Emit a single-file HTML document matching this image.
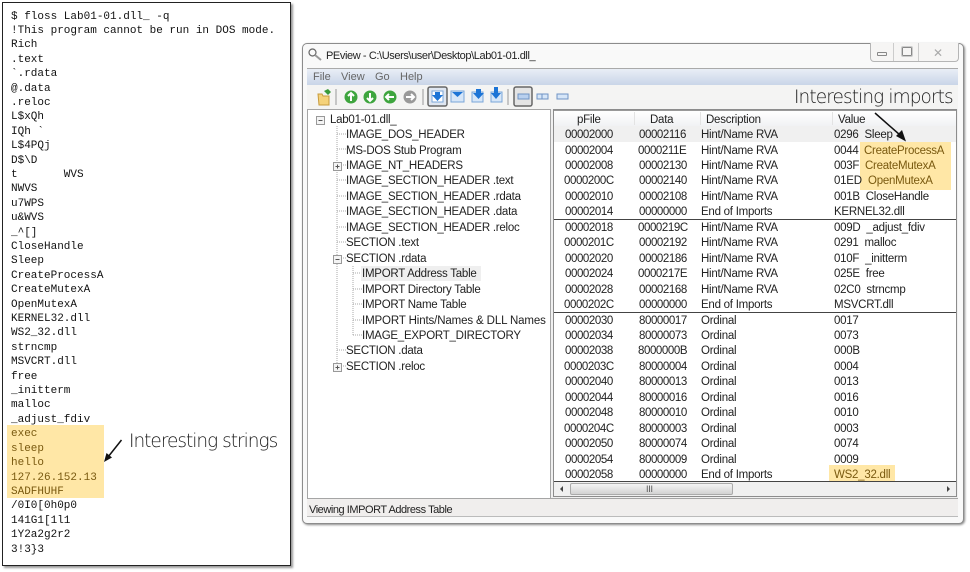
<!DOCTYPE html>
<html><head><meta charset="utf-8">
<style>
html,body{margin:0;padding:0;background:#fff}
body{width:970px;height:572px;position:relative;overflow:hidden;font-family:"Liberation Sans",sans-serif;color:#1c1c1c}
.a{position:absolute}
.t{position:absolute;white-space:pre;font-size:11.5px;line-height:14px;color:#222;letter-spacing:-.25px;margin-top:1px}
.d{letter-spacing:-.42px}
#term{left:2px;top:2px;width:287px;height:562px;border:1px solid #222;box-shadow:2px 2px 2px #999;background:#fff}
#lines{left:11px;top:9.5px;font:11px/14.4px "Liberation Mono",monospace;color:#111;white-space:pre}
.hl{background:#ffe7a6}
.big{position:absolute;white-space:pre;font-family:"DejaVu Sans",sans-serif;font-weight:200;color:#1c1c1c}
.n{color:#7a5a10}
.ln{position:absolute;background:#bdbdbd}
</style></head><body>
<div class="a" id="term"></div>
<div class="a hl" style="left:7px;top:425px;width:97px;height:73px"></div>
<div class="a" id="lines">$ floss Lab01-01.dll_ -q
!This program cannot be run in DOS mode.
Rich
.text
`.rdata
@.data
.reloc
L$xQh
IQh `
L$4PQj
D$\D
t       WVS
NWVS
u7WPS
u&amp;WVS
_^[]
CloseHandle
Sleep
CreateProcessA
CreateMutexA
OpenMutexA
KERNEL32.dll
WS2_32.dll
strncmp
MSVCRT.dll
free
_initterm
malloc
_adjust_fdiv
<span class="n">exec
sleep
hello
127.26.152.13
SADFHUHF</span>
/0I0[0h0p0
141G1[1l1
1Y2a2g2r2
3!3}3</div>
<div class="big" id="s1" style="left:129px;top:431px;font-size:18.5px;line-height:22px;letter-spacing:-1px">Interesting strings</div>
<svg class="a" style="left:100px;top:435px" width="30" height="35"><path d="M21.500 5 L8 22" stroke="#111" stroke-width="1.5"/><path d="M4 27 L6.500 18 L12 22.500 Z" fill="#111"/></svg>

<div class="a" style="left:302px;top:43px;width:660px;height:479px;background:#f9f9f9;border:1px solid #8c8c8c;border-radius:5px;box-shadow:1px 1px 2px #888"></div>
<svg class="a" style="left:306px;top:46px" width="18" height="18" fill="none" stroke="#666"><circle cx="6.500" cy="6.500" r="3.500" stroke-width="1.200"/><path d="M9 9 L15 14" stroke-width="2" stroke="#999"/></svg>
<div class="t" style="left:326px;top:48px;font-size:11px;letter-spacing:-.4px">PEview - C:\Users\user\Desktop\Lab01-01.dll_</div>
<div class="a" style="left:870px;top:43px;width:87px;height:18px;background:#f6f5f4;border:1px solid #b5b5b5;border-top:0;border-radius:0 0 4px 4px"></div>
<div class="a" style="left:893px;top:43px;width:1px;height:18px;background:#ccc"></div>
<div class="a" style="left:918px;top:43px;width:1px;height:18px;background:#ccc"></div>
<div class="a" style="left:877px;top:52px;width:8px;height:2px;border:1px solid #888;border-radius:1px"></div>
<div class="a" style="left:902px;top:47px;width:8px;height:7px;border:1px solid #888;outline:1px solid #ccc;border-radius:1px"></div>
<div class="t" style="left:933px;top:45px;font-size:12px;color:#aaa">&#x2715;</div>

<div class="a" style="left:307px;top:68px;width:651px;height:16px;background:linear-gradient(#e9eef6,#c9d5e8);border-top:1px solid #aaa"></div>
<div class="t" style="left:313px;top:69px;font-size:11px;color:#666;letter-spacing:0">File</div>
<div class="t" style="left:341px;top:69px;font-size:11px;color:#666;letter-spacing:0">View</div>
<div class="t" style="left:375px;top:69px;font-size:11px;color:#666;letter-spacing:0">Go</div>
<div class="t" style="left:400px;top:69px;font-size:11px;color:#666;letter-spacing:0">Help</div>
<div class="a" style="left:307px;top:85px;width:651px;height:24px;background:#f4f4f3;border-bottom:1px solid #ddd"></div>

<svg class="a" style="left:305px;top:84px" width="280" height="26">
<path d="M13 10h4l1 2h6v9H14z" fill="#f5d27a" stroke="#c79b3c"/><path d="M19 7l4-2 3 3-3 3" fill="#3a9a3a"/>
<line x1="31" y1="5" x2="31" y2="21" stroke="#999"/>
<g fill="#3ea53e"><circle cx="46" cy="13" r="6.500"/><circle cx="65" cy="13" r="6.500"/><circle cx="85" cy="13" r="6.500"/></g><circle cx="105" cy="13" r="6.500" fill="#999"/>
<g stroke="#fff" stroke-width="2" fill="none"><path d="M46 17V9M43 12l3-3 3 3"/><path d="M65 9v8M62 14l3 3 3-3"/><path d="M89 13h-8M84 10l-3 3 3 3"/><path d="M101 13h8M106 10l3 3-3 3"/></g>
<line x1="118" y1="5" x2="118" y2="21" stroke="#999"/>
<rect x="123" y="3" width="19" height="19" rx="2" fill="#dfe6f0" stroke="#666" stroke-width="1.500"/>
<rect x="127" y="7" width="11" height="11" fill="#fff" stroke="#7aa6d8"/><path d="M130 8h5v3h3l-5.500 6-5.500-6h3z" fill="#1c74d6"/>
<rect x="146" y="7" width="13" height="11" fill="#d6e6f8" stroke="#7aa6d8"/><path d="M147 8h11l-5.500 5z" fill="#1c74d6"/>
<rect x="167" y="8" width="11" height="10" fill="#d6e6f8" stroke="#7aa6d8"/><path d="M171 5h5v4h3l-5.500 6-5.500-6h3z" fill="#1c74d6"/>
<rect x="186" y="8" width="11" height="10" fill="#d6e6f8" stroke="#7aa6d8"/><path d="M189 3h4v6h3l-5 6-5-6h3z" fill="#1c74d6"/>
<line x1="203" y1="5" x2="203" y2="21" stroke="#999"/>
<rect x="209" y="3" width="18" height="19" rx="2" fill="#e4e4e4" stroke="#666" stroke-width="1.500"/>
<rect x="213" y="10" width="11" height="5" fill="#b9d0ee" stroke="#6f93c4"/>
<rect x="232" y="10" width="11" height="5" fill="#d6e6f8" stroke="#6f93c4"/><rect x="252" y="10" width="11" height="5" fill="#d6e6f8" stroke="#6f93c4"/>
<line x1="237" y1="10" x2="237" y2="15" stroke="#6f93c4"/>
</svg>

<div class="a" style="left:307px;top:109px;width:651px;height:390px;background:#f0f0f0"></div>
<div class="a" style="left:307px;top:109px;width:242px;height:388px;background:#fff;border:1px solid #a5a5a5"></div>
<div class="a" style="left:553px;top:109px;width:404px;height:388px;background:#fff;border:1px solid #8c8c8c;box-sizing:border-box"></div>
<div class="a" style="left:554px;top:111px;width:402px;height:15px;background:linear-gradient(#fff,#f1f2f4)"></div>
<div class="a" style="left:554px;top:126px;width:402px;height:16px;background:#f0f0f0"></div>
<div class="a" style="left:634px;top:112px;width:1px;height:13px;background:#e3e3e3"></div>
<div class="a" style="left:700px;top:112px;width:1px;height:13px;background:#e3e3e3"></div>
<div class="a" style="left:832px;top:112px;width:1px;height:13px;background:#e3e3e3"></div>
<div class="t" style="left:577px;top:112px">pFile</div><div class="t" style="left:650px;top:112px">Data</div><div class="t" style="left:706px;top:112px">Description</div><div class="t" style="left:838px;top:112px">Value</div>

<div class="a hl" style="left:860px;top:142px;width:91px;height:48px"></div>
<div class="a hl" style="left:829px;top:465px;width:66px;height:17px"></div>
<div class="a" style="left:554px;top:219px;width:402px;height:1px;background:#444"></div>
<div class="a" style="left:554px;top:312px;width:402px;height:1px;background:#444"></div>
<div class="a" style="left:554px;top:481px;width:402px;height:1px;background:#444"></div>

<div class="t d" style="left:565px;top:127.000px">00002000</div><div class="t d" style="left:639px;top:127.000px">00002116</div><div class="t" style="left:701px;top:127.000px">Hint/Name RVA</div><div class="t" style="left:834px;top:127.000px">0296  Sleep</div>
<div class="t d" style="left:565px;top:142.500px">00002004</div><div class="t d" style="left:638px;top:142.500px">0000211E</div><div class="t" style="left:701px;top:142.500px">Hint/Name RVA</div><div class="t" style="left:834px;top:142.500px">0044</div><div class="t n" style="left:864px;top:142.500px">CreateProcessA</div>
<div class="t d" style="left:565px;top:157.900px">00002008</div><div class="t d" style="left:639px;top:157.900px">00002130</div><div class="t" style="left:701px;top:157.900px">Hint/Name RVA</div><div class="t" style="left:834px;top:157.900px">003F</div><div class="t n" style="left:865px;top:157.900px">CreateMutexA</div>
<div class="t d" style="left:564px;top:173.400px">0000200C</div><div class="t d" style="left:639px;top:173.400px">00002140</div><div class="t" style="left:701px;top:173.400px">Hint/Name RVA</div><div class="t" style="left:834px;top:173.400px">01ED</div><div class="t n" style="left:868px;top:173.400px">OpenMutexA</div>
<div class="t d" style="left:565px;top:188.800px">00002010</div><div class="t d" style="left:639px;top:188.800px">00002108</div><div class="t" style="left:701px;top:188.800px">Hint/Name RVA</div><div class="t" style="left:834px;top:188.800px">001B  CloseHandle</div>
<div class="t d" style="left:565px;top:204.300px">00002014</div><div class="t d" style="left:639px;top:204.300px">00000000</div><div class="t" style="left:701px;top:204.300px">End of Imports</div><div class="t" style="left:834px;top:204.300px">KERNEL32.dll</div>
<div class="t d" style="left:565px;top:219.700px">00002018</div><div class="t d" style="left:638px;top:219.700px">0000219C</div><div class="t" style="left:701px;top:219.700px">Hint/Name RVA</div><div class="t" style="left:834px;top:219.700px">009D  _adjust_fdiv</div>
<div class="t d" style="left:564px;top:235.200px">0000201C</div><div class="t d" style="left:639px;top:235.200px">00002192</div><div class="t" style="left:701px;top:235.200px">Hint/Name RVA</div><div class="t" style="left:834px;top:235.200px">0291  malloc</div>
<div class="t d" style="left:565px;top:250.600px">00002020</div><div class="t d" style="left:639px;top:250.600px">00002186</div><div class="t" style="left:701px;top:250.600px">Hint/Name RVA</div><div class="t" style="left:834px;top:250.600px">010F  _initterm</div>
<div class="t d" style="left:565px;top:266.100px">00002024</div><div class="t d" style="left:638px;top:266.100px">0000217E</div><div class="t" style="left:701px;top:266.100px">Hint/Name RVA</div><div class="t" style="left:834px;top:266.100px">025E  free</div>
<div class="t d" style="left:565px;top:281.500px">00002028</div><div class="t d" style="left:639px;top:281.500px">00002168</div><div class="t" style="left:701px;top:281.500px">Hint/Name RVA</div><div class="t" style="left:834px;top:281.500px">02C0  strncmp</div>
<div class="t d" style="left:564px;top:297.000px">0000202C</div><div class="t d" style="left:639px;top:297.000px">00000000</div><div class="t" style="left:701px;top:297.000px">End of Imports</div><div class="t" style="left:834px;top:297.000px">MSVCRT.dll</div>
<div class="t d" style="left:565px;top:312.500px">00002030</div><div class="t d" style="left:639px;top:312.500px">80000017</div><div class="t" style="left:701px;top:312.500px">Ordinal</div><div class="t" style="left:834px;top:312.500px">0017</div>
<div class="t d" style="left:565px;top:327.900px">00002034</div><div class="t d" style="left:639px;top:327.900px">80000073</div><div class="t" style="left:701px;top:327.900px">Ordinal</div><div class="t" style="left:834px;top:327.900px">0073</div>
<div class="t d" style="left:565px;top:343.400px">00002038</div><div class="t d" style="left:638px;top:343.400px">8000000B</div><div class="t" style="left:701px;top:343.400px">Ordinal</div><div class="t" style="left:834px;top:343.400px">000B</div>
<div class="t d" style="left:564px;top:358.800px">0000203C</div><div class="t d" style="left:639px;top:358.800px">80000004</div><div class="t" style="left:701px;top:358.800px">Ordinal</div><div class="t" style="left:834px;top:358.800px">0004</div>
<div class="t d" style="left:565px;top:374.300px">00002040</div><div class="t d" style="left:639px;top:374.300px">80000013</div><div class="t" style="left:701px;top:374.300px">Ordinal</div><div class="t" style="left:834px;top:374.300px">0013</div>
<div class="t d" style="left:565px;top:389.700px">00002044</div><div class="t d" style="left:639px;top:389.700px">80000016</div><div class="t" style="left:701px;top:389.700px">Ordinal</div><div class="t" style="left:834px;top:389.700px">0016</div>
<div class="t d" style="left:565px;top:405.200px">00002048</div><div class="t d" style="left:639px;top:405.200px">80000010</div><div class="t" style="left:701px;top:405.200px">Ordinal</div><div class="t" style="left:834px;top:405.200px">0010</div>
<div class="t d" style="left:564px;top:420.600px">0000204C</div><div class="t d" style="left:639px;top:420.600px">80000003</div><div class="t" style="left:701px;top:420.600px">Ordinal</div><div class="t" style="left:834px;top:420.600px">0003</div>
<div class="t d" style="left:565px;top:436.100px">00002050</div><div class="t d" style="left:639px;top:436.100px">80000074</div><div class="t" style="left:701px;top:436.100px">Ordinal</div><div class="t" style="left:834px;top:436.100px">0074</div>
<div class="t d" style="left:565px;top:451.500px">00002054</div><div class="t d" style="left:639px;top:451.500px">80000009</div><div class="t" style="left:701px;top:451.500px">Ordinal</div><div class="t" style="left:834px;top:451.500px">0009</div>
<div class="t d" style="left:565px;top:467.000px">00002058</div><div class="t d" style="left:639px;top:467.000px">00000000</div><div class="t" style="left:701px;top:467.000px">End of Imports</div><div class="t n" style="left:834px;top:467.000px">WS2_32.dll</div>

<div class="a" style="left:554px;top:482px;width:402px;height:14px;background:#f0f0f0"></div>
<div class="a" style="left:570px;top:483px;width:163px;height:12px;border:1px solid #aaa;border-radius:2px;box-sizing:border-box;background:linear-gradient(#f4f4f4,#d2d2d2)"></div>
<div class="t" style="left:646px;top:481px;font-size:9px;color:#555">III</div>
<div class="a" style="left:560px;top:486px;width:0;height:0;border:3px solid transparent;border-right-color:#444;border-left:0"></div>
<div class="a" style="left:947px;top:486px;width:0;height:0;border:3px solid transparent;border-left-color:#444;border-right:0"></div>

<div class="a" style="left:307px;top:498px;width:651px;height:19px;background:#f0eeed;border-top:1px solid #a5a5a5;border-bottom:1px solid #bbb;box-sizing:border-box"></div>
<div class="t" style="left:309px;top:502px;font-size:11px;letter-spacing:-.45px">Viewing IMPORT Address Table</div>
<div class="big" id="s2" style="left:794px;top:87px;font-size:18.500px;line-height:22px;letter-spacing:-.9px">Interesting imports</div>
<div class="a" style="left:554px;top:110px;width:402px;height:1px;background:#999"></div>
<svg class="a" style="left:870px;top:108px" width="50" height="40"><path d="M5 5 L30 27" stroke="#111" stroke-width="1.500"/><path d="M36 33.500 L26 28 L32 22 Z" fill="#111"/></svg>

<svg class="a" style="left:310px;top:112px" width="80" height="270" fill="none" stroke="#aaa" stroke-dasharray="1 1">
<path d="M27 14V254M27 22h9M27 37h9M27 53h9M27 68h9M27 84h9M27 99h9M27 115h9M27 130h9M27 146h9M27 238h9M27 254h9"/>
<path d="M43 154V223M43 161h9M43 177h9M43 192h9M43 208h9M43 223h9"/>
</svg>
<svg class="a" style="left:315px;top:114px" width="30" height="265" fill="none" stroke="#999">
<rect x="1.500" y="2.500" width="8" height="8" fill="#f4f4f4"/><path d="M3.500 6.500h4" stroke="#555"/>
<rect x="18.500" y="48.500" width="8" height="8" fill="#f4f4f4"/><path d="M20.500 52.500h4M22.500 50.500v4" stroke="#555"/>
<rect x="18.500" y="141.500" width="8" height="8" fill="#f4f4f4"/><path d="M20.500 145.500h4" stroke="#555"/>
<rect x="18.500" y="249.500" width="8" height="8" fill="#f4f4f4"/><path d="M20.500 253.500h4M22.500 251.500v4" stroke="#555"/>
</svg>
<div class="a" style="left:361px;top:266px;width:120px;height:15px;background:#efefef"></div>
<div class="t" style="left:330px;top:112.000px">Lab01-01.dll_</div>
<div class="t" style="left:346px;top:127.000px">IMAGE_DOS_HEADER</div>
<div class="t" style="left:346px;top:142.500px">MS-DOS Stub Program</div>
<div class="t" style="left:346px;top:157.900px">IMAGE_NT_HEADERS</div>
<div class="t" style="left:346px;top:173.400px">IMAGE_SECTION_HEADER .text</div>
<div class="t" style="left:346px;top:188.800px">IMAGE_SECTION_HEADER .rdata</div>
<div class="t" style="left:346px;top:204.300px">IMAGE_SECTION_HEADER .data</div>
<div class="t" style="left:346px;top:219.700px">IMAGE_SECTION_HEADER .reloc</div>
<div class="t" style="left:346px;top:235.200px">SECTION .text</div>
<div class="t" style="left:346px;top:250.600px">SECTION .rdata</div>
<div class="t" style="left:362px;top:266.100px">IMPORT Address Table</div>
<div class="t" style="left:362px;top:281.500px">IMPORT Directory Table</div>
<div class="t" style="left:362px;top:297.000px">IMPORT Name Table</div>
<div class="t" style="left:362px;top:312.500px;letter-spacing:-.13px">IMPORT Hints/Names &amp; DLL Names</div>
<div class="t" style="left:362px;top:327.900px">IMAGE_EXPORT_DIRECTORY</div>
<div class="t" style="left:346px;top:343.400px">SECTION .data</div>
<div class="t" style="left:346px;top:358.800px">SECTION .reloc</div>
</body></html>
